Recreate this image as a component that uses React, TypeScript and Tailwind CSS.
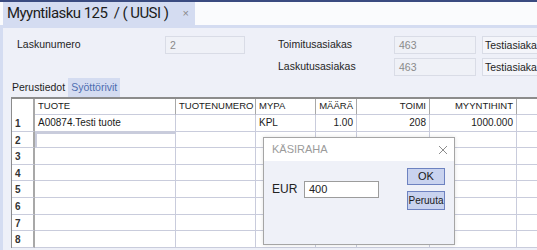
const font = { fontFamily: '"Liberation Sans", Arial, sans-serif' }

type Col = { label: string; cls: string; right?: boolean }

const cols: Col[] = [
  { label: 'TUOTE', cls: 'w-[141px]' },
  { label: 'TUOTENUMERO', cls: 'w-[80px]' },
  { label: 'MYPA', cls: 'w-[60px]' },
  { label: 'MÄÄRÄ', cls: 'w-[41px]', right: true },
  { label: 'TOIMI', cls: 'w-[73px]', right: true },
  { label: 'MYYNTIHINT', cls: 'w-[87px]', right: true },
  { label: '', cls: 'flex-1' },
]

const firstRow = ['A00874.Testi tuote', '', 'KPL', '1.00', '208', '1000.000', '']

function Field({ value, w }: { value: string; w: string }) {
  return (
    <div
      className={`${w} h-[18px] shrink-0 border border-[#d9dce6] bg-[#eff1f7] px-[4px] text-[10.5px] leading-[16px] text-[#8a8a8a]`}
    >
      {value}
    </div>
  )
}

function Grid() {
  const rows = [1, 2, 3, 4, 5, 6, 7, 8]
  return (
    <div className="ml-[8px] border-t-2 border-l border-[#8c8c8c] bg-white text-[10px] text-[#1a1a1a]">
      <div className="flex h-[16px] text-[9.5px]">
        <div className="w-[23px] shrink-0 border-r-2 border-[#a8a8a8]" />
        {cols.map((c, i) => (
          <div
            key={i}
            className={`${c.cls} shrink-0 overflow-hidden whitespace-nowrap border-r border-b border-r-[#a8a8a8] border-b-[#c9ccdc] px-[3px] leading-[14px] ${c.right ? 'text-right' : ''}`}
          >
            {c.label}
          </div>
        ))}
      </div>
      {rows.map((r) => (
        <div key={r} className="flex h-[16.6px]">
          <div className="w-[23px] shrink-0 border-r-2 border-b border-r-[#a8a8a8] border-b-[#c9ccdc] pl-[3px] leading-[17px] font-semibold text-[#333]">
            {r}
          </div>
          {cols.map((c, i) => (
            <div
              key={i}
              className={`${c.cls} shrink-0 overflow-hidden whitespace-nowrap border-r border-b border-[#c9ccdc] px-[3px] leading-[15px] ${c.right ? 'text-right' : ''} ${r === 2 && i === 0 ? 'border-2 border-[#3a3a3a]' : ''}`}
            >
              {r === 1 ? firstRow[i] : ''}
            </div>
          ))}
        </div>
      ))}
    </div>
  )
}

function Dialog() {
  return (
    <div className="absolute left-[263px] top-[137px] flex h-[108px] w-[192px] flex-col border border-[#a5a5a5] bg-[#eff1f8] shadow-[0_0_4px_rgba(0,0,0,0.12)]">
      <div className="flex h-[23px] items-center justify-between bg-white pl-[8px] pr-[6px]">
        <span className="text-[11px] text-[#9b9b9b]">KÄSIRAHA</span>
        <svg width="10" height="10" viewBox="0 0 10 10" className="text-[#8d8d8d]">
          <path d="M1 1 L9 9 M9 1 L1 9" stroke="currentColor" strokeWidth="1" />
        </svg>
      </div>
      <div className="flex flex-1 pt-[7px]">
        <div className="flex items-center self-start pt-[12px] pl-[8px]">
          <span className="w-[32px] text-[12px] text-[#222]">EUR</span>
          <div className="h-[17px] w-[75px] border border-[#9c9c9c] bg-white pl-[4px] text-[11px] leading-[15px] text-[#222]">
            400
          </div>
        </div>
        <div className="ml-[28px] flex flex-col gap-[6px]">
          <div className="flex h-[17px] w-[38px] items-center justify-center border border-[#6d82c0] bg-[#c9d3ef] text-[11px] text-[#1a1a1a]">
            OK
          </div>
          <div className="flex h-[19px] w-[38px] items-center justify-center border border-[#6d82c0] bg-[#c9d3ef] text-[10px] text-[#1a1a1a]">
            Peruuta
          </div>
        </div>
      </div>
    </div>
  )
}

export default function App() {
  return (
    <div className="relative h-[250px] w-[537px] overflow-hidden bg-white" style={font}>
      <div className="h-[2px] bg-[#3a4b80]" />
      <div className="flex h-[23px] bg-[#fafbfd]">
        <div className="ml-[3px] flex w-[192px] items-center bg-[#d4dcf1] pl-[4px]">
          <span
            className="whitespace-nowrap text-[15px] leading-none tracking-[-0.55px] text-[#1c1c1c]"
            style={{ fontFamily: 'Roboto, "Noto Sans", sans-serif' }}
          >
            Myyntilasku 125&nbsp; / ( UUSI )
          </span>
          <span className="ml-auto mr-[6px] text-[11px] text-[#8a8a8a]">×</span>
        </div>
      </div>
      <div className="h-[3px] bg-[#d4dcf1]" />
      <div className="flex h-[222px]">
        <div className="w-[3px] shrink-0 bg-[#d4dcf1]" />
        <div className="flex-1 bg-[#eef0f8] pt-[8px]">
          <div className="flex h-[18px] items-center text-[10.5px] text-[#1f1f1f]">
            <span className="w-[162px] shrink-0 pl-[14px]">Laskunumero</span>
            <Field value="2" w="w-[80px]" />
            <span className="ml-[33px] w-[116px] shrink-0">Toimitusasiakas</span>
            <Field value="463" w="w-[82px]" />
            <div className="ml-[6px] h-[18px] flex-1 overflow-hidden whitespace-nowrap border border-[#d9dce6] bg-[#f4f5fa] px-[2px] leading-[16px] text-[#1f1f1f]">
              Testiasiakas
            </div>
          </div>
          <div className="mt-[4px] flex h-[18px] items-center text-[10.5px] text-[#1f1f1f]">
            <span className="ml-[275px] w-[116px] shrink-0">Laskutusasiakas</span>
            <Field value="463" w="w-[82px]" />
            <div className="ml-[6px] h-[18px] flex-1 overflow-hidden whitespace-nowrap border border-[#d9dce6] bg-[#f4f5fa] px-[2px] leading-[16px] text-[#1f1f1f]">
              Testiasiakas
            </div>
          </div>
          <div className="mt-[2px] flex h-[19px] items-center pl-[6px] text-[10.5px]">
            <span className="flex h-full items-center px-[3px] text-[#1f1f1f]">Perustiedot</span>
            <span className="flex h-full items-center bg-[#d4dcf1] px-[3px] text-[#4e6db0]">Syöttörivit</span>
          </div>
          <Grid />
        </div>
      </div>
      <Dialog />
    </div>
  )
}
